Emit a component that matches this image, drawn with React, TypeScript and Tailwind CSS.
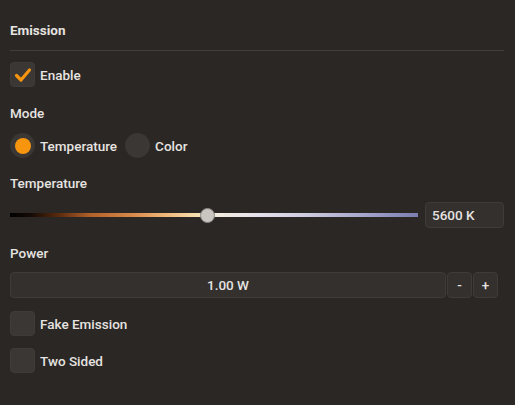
import { useState } from "react";

function Check({ on }: { on?: boolean }) {
  return (
    <div className="flex h-[25px] w-[25px] items-center justify-center rounded-[4px] border border-[#3e3b39] bg-[#3a3735]">
      {on && (
        <svg width="20" height="20" viewBox="0 0 20 20" fill="none">
          <path d="M3.5 10.5l4.5 4.5 8.5-10" stroke="#f5940f" strokeWidth="3.2" strokeLinecap="round" strokeLinejoin="round" />
        </svg>
      )}
    </div>
  );
}

function Radio({ on }: { on?: boolean }) {
  return (
    <div className="flex h-[25px] w-[25px] items-center justify-center rounded-full bg-[#3a3735]">
      {on && <div className="h-[16px] w-[16px] rounded-full bg-[#f7960e]" />}
    </div>
  );
}

export default function App() {
  const [enabled, setEnabled] = useState(true);
  const [mode, setMode] = useState<"temp" | "color">("temp");
  const [fake, setFake] = useState(false);
  const [twoSided, setTwoSided] = useState(false);

  return (
    <div
      className="h-[405px] w-[515px] bg-[#2a2725] pl-[10px] pr-[11px] text-[13.5px] leading-[16px] font-medium text-[#e6e3e0]"
      style={{ fontFamily: "Roboto, 'Noto Sans', sans-serif" }}
    >
      <div className="pt-[22px] pb-[12px] font-bold">Emission</div>
      <div className="h-px bg-[#403d3b]" />

      <button type="button" onClick={() => setEnabled(!enabled)} className="mt-[11px] flex items-center gap-[5px]">
        <Check on={enabled} />
        <span>Enable</span>
      </button>

      <div className="mt-[18px]">Mode</div>
      <div className="mt-[12px] flex items-center">
        <button type="button" onClick={() => setMode("temp")} className="flex items-center gap-[5px]">
          <Radio on={mode === "temp"} />
          <span>Temperature</span>
        </button>
        <button type="button" onClick={() => setMode("color")} className="ml-[8px] flex items-center gap-[5px]">
          <Radio on={mode === "color"} />
          <span>Color</span>
        </button>
      </div>

      <div className="mt-[17px]">Temperature</div>
      <div className="mt-[11px] flex items-center gap-[7px]">
        <div className="relative h-[15px] flex-1">
          <div className="absolute top-[5px] left-0 right-0 h-[4px] bg-[linear-gradient(to_right,#000000_0%,#140a05_5%,#5a2a0e_12%,#b5622a_20%,#d9884a_30%,#f0b878_38%,#f6dcaa_45%,#f4ecdc_50%,#e6e2ec_60%,#cfcde0_72%,#a7a8cc_86%,#7a7db0_100%)]" />
          <div className="absolute top-0 left-[190px] h-[15px] w-[15px] rounded-full border border-[#8a8683] bg-[#c9c5c1]" />
        </div>
        <div className="flex h-[26px] w-[79px] items-center rounded-[4px] border border-[#3e3b39] bg-[#33302e] px-[6px]">
          5600 K
        </div>
      </div>

      <div className="mt-[17px]">Power</div>
      <div className="mt-[11px] flex items-center gap-[1px]">
        <div className="flex h-[26px] flex-1 items-center justify-center rounded-[4px] border border-[#3e3b39] bg-[#33302e]">
          1.00 W
        </div>
        <button type="button" className="flex h-[26px] w-[25px] items-center justify-center rounded-[4px] border border-[#3e3b39] bg-[#33302e]">
          -
        </button>
        <button type="button" className="flex h-[26px] w-[25px] items-center justify-center rounded-[4px] border border-[#3e3b39] bg-[#33302e]">
          +
        </button>
        <div className="w-[5px]" />
      </div>

      <button type="button" onClick={() => setFake(!fake)} className="mt-[13px] flex items-center gap-[5px]">
        <Check on={fake} />
        <span>Fake Emission</span>
      </button>
      <button type="button" onClick={() => setTwoSided(!twoSided)} className="mt-[12px] flex items-center gap-[5px]">
        <Check on={twoSided} />
        <span>Two Sided</span>
      </button>
    </div>
  );
}
